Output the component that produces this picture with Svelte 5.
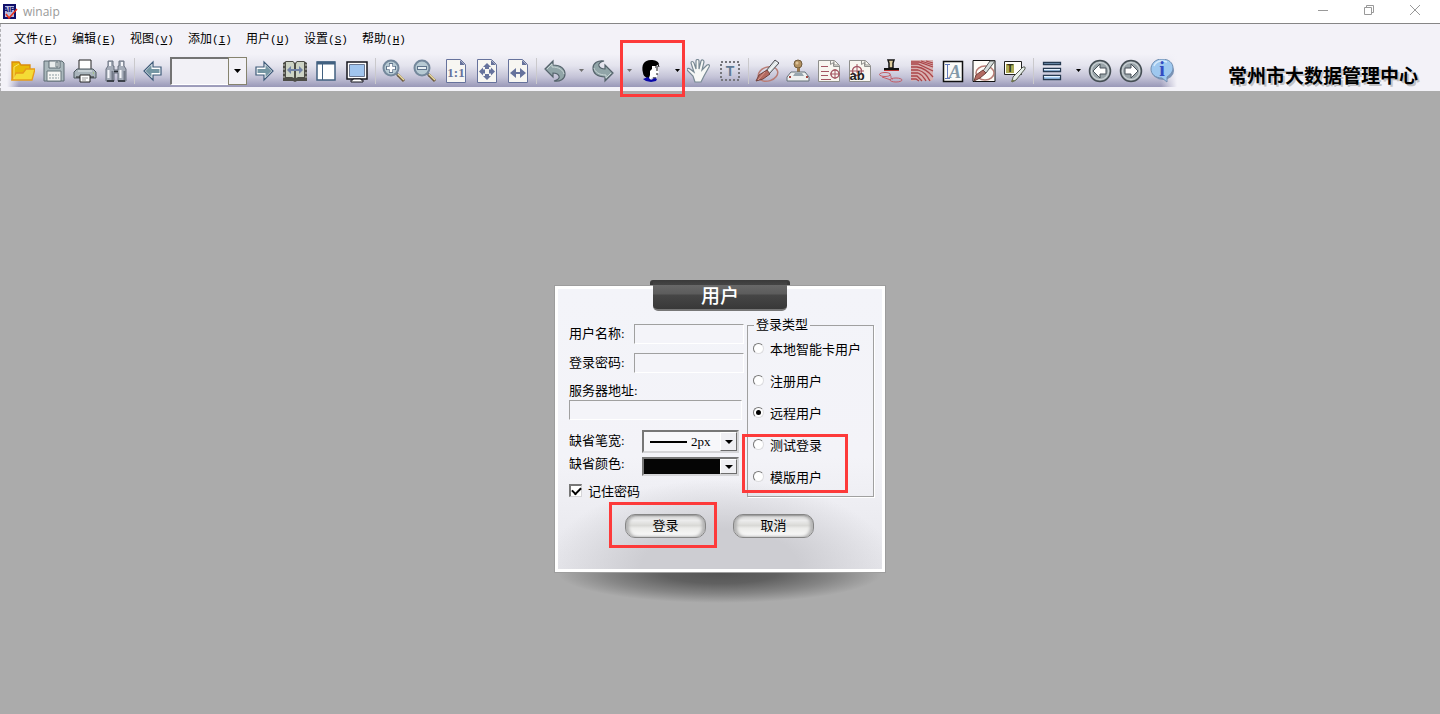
<script lang="ts">
  type Tool = { kind: 'button' | 'caret' | 'sep' | 'page'; icon?: string; label?: string; dim?: boolean; marked?: boolean };

  const menus = [
    { text: '文件', key: 'F' },
    { text: '编辑', key: 'E' },
    { text: '视图', key: 'V' },
    { text: '添加', key: 'I' },
    { text: '用户', key: 'U' },
    { text: '设置', key: 'S' },
    { text: '帮助', key: 'H' }
  ];

  const loginTypes = ['本地智能卡用户', '注册用户', '远程用户', '测试登录', '模版用户'];

  let userName = $state('');
  let password = $state('');
  let server = $state('');
  let page = $state('');
  let remember = $state(true);
  let loginType = $state('远程用户');

  const sheet = '<path d="M2.500 .500h14l5 5v18h-19z" fill="#f7f6f2" stroke="#66729c"/><path d="M16 1v5h5z" fill="#66729c"/>';
  const paper = '<path d="M1.500 1.500h16l5 5v16h-21z" fill="#f8f6f0" stroke="#8f8f8c"/><path d="M13.500 1.500v4l3-2v4h6M17 2v4h5" fill="none" stroke="#8f8f8c"/>';
  const arrowLeft = '<path d="M12 3v5h8v8h-8v5l-9-9z" fill="#fff" stroke="#3d5a78" stroke-width="1.200"/><path d="M10.500 6v4h8v4h-8v4l-6-6z" fill="#7596a3"/>';
  const lens = '<path d="M14 14l3 3" stroke="#777" stroke-width="3"/><path d="M16 16l6 6" stroke="#6c5a3e" stroke-width="3"/><path d="M16 15l6 6" stroke="#ecdca0" stroke-width="1.500"/><circle cx="9" cy="9" r="7.500" fill="#b7cad3" stroke="#74889c" stroke-width="2"/>';
  const round = '<circle cx="12" cy="12" r="10.500" fill="#aab4b8" stroke="#454e54" stroke-width="1.500"/><circle cx="12" cy="12" r="8.500" fill="#99a4a9" stroke="#d4dadd"/>';
  const turn = '<path d="M2 10L10 2v4c8 0 12 4 12 9s-5 8-11 7c4-1 6-3 5-5-1-2-3-3-6-3v4z" fill="#91a5a8" stroke="#55636c" stroke-width="1.200"/><path d="M4 10l5-5v3c7 0 11 3 12 7" fill="none" stroke="#c9d6d6"/>';
  const pen = '<path d="M11 12L20 1l4 3-10 11z" fill="#dbe2e4" stroke="#4b4a50"/><path d="M13 13l9-10" stroke="#fff"/><path d="M12 11l3 4-7 5-7 2 3-6z" fill="#b36a61" stroke="#71413c"/><path d="M10 13l-7 8" stroke="#d89b90"/>';

  const icons: Record<string, string> = {
    open: '<path d="M1 21V3h7l2 3h9v4" fill="#e8ba08" stroke="#da8c0c" stroke-width="1.300"/><path d="M1 21l4-7h7l3-4h9l-3 11z" fill="#f4dc35" stroke="#e69a19" stroke-width="1.300"/><path d="M3 20V8l5-3" fill="none" stroke="#f9e36a"/>',
    save: '<path d="M2 2h18l2 2v18H2z" fill="#aab8bc" stroke="#5c6b72"/><path d="M7 2h11v7H7z" fill="#e9eded" stroke="#5c6b72"/><path d="M14 3h2v5h-2zM5 12h14v10H5z" fill="#f6f6f4" stroke="#66767d"/><path d="M7 16h10M7 19h10" stroke="#8c9ba1" stroke-dasharray="2 1"/>',
    print: '<path d="M6 1h12v10H6z" fill="#fff" stroke="#222"/><path d="M4 10h16l3 3v6H1v-6z" fill="#a9b4bb" stroke="#4b565d"/><path d="M5 12h14" stroke="#e6ecef"/><path d="M3 18h18" stroke="#222"/><path d="M7 16h10v7H7z" fill="#fff" stroke="#222"/><path d="M9 19h6M9 21h4" stroke="#999"/><path d="M20 14h1" stroke="#9ccd52"/>',
    find: '<path d="M4 2h5v5h1v4h4V7h1V2h5v5l2 3v12h-8v-8h-4v8H2V10l2-3z" fill="#a5acb8" stroke="#68707f"/><path d="M6 3v4M18 3v4M4.500 11v8M16.500 11v8" stroke="#f5f6fa" stroke-width="2" fill="none"/><path d="M8.500 12v9M20.500 12v9" stroke="#727987" stroke-width="2"/><path d="M3 22h7M14 22h7M10 12.500h4" stroke="#252a31" stroke-width="1.500"/>',
    prev: arrowLeft,
    next: `<g transform="matrix(-1 0 0 1 24 0)">${arrowLeft}</g>`,
    book: '<path d="M0 4l3-2h7l2 2 2-2h7l3 2v18H14l-2 1-2-1H0z" fill="#4c4c46"/><path d="M3 3h7l1 2v14l-2-1H3zM21 3h-7l-1 2v14l2-1h6z" fill="#cdd3c5"/><path d="M0 6h2M0 10h2M0 14h2M0 18h2M22 6h2M22 10h2M22 14h2M22 18h2" stroke="#c8c8c0"/><path d="M4 11l4-4v3h8V7l4 4-4 4v-3H8v3z" fill="#7081a5"/>',
    panel: '<path d="M3 3h18v18H3z" fill="#fff" stroke="#416080" stroke-width="1.500"/><path d="M3 4h18" stroke="#416080" stroke-width="3"/><path d="M8.500 3v18" stroke="#416080"/>',
    screen: '<path d="M2 3h20v17H2z" fill="#fff" stroke="#15151c" stroke-width="1.500"/><path d="M4.500 5.500h15v12h-15z" fill="#a1c5ef" stroke="#6c7892"/><path d="M8 20h8v1h2v2H6v-2h2z" fill="#fff" stroke="#15151c"/>',
    zoomin: lens + '<path d="M9 4v10M4 9h10" stroke="#60758d" stroke-width="4"/><path d="M9 5v8M5 9h8" stroke="#fff" stroke-width="2.500"/>',
    zoomout: lens + '<path d="M4 9h10" stroke="#60758d" stroke-width="4"/><path d="M5 9h8" stroke="#e8f0f4" stroke-width="2"/>',
    actual: sheet + '<text x="12" y="18" class="i-ratio">1:1</text>',
    fit: sheet + '<path d="M12 4l4 4h-2v2h-4V8H8zM12 21l4-4h-2v-2h-4v2H8zM4 12.500l4-4v2h2v4H8v2zM20 12.500l-4-4v2h-2v4h2v2z" fill="#66729c"/>',
    width: sheet + '<path d="M4 14l6-5v4h4V9l6 5-6 5v-4h-4v4z" fill="#66729c"/>',
    undo: turn,
    redo: `<g transform="rotate(180 12 12)">${turn}</g>`,
    user: '<path d="M8 6l10-1 1 4 1 5-2 1v3h-4l-2 2H8z" fill="#fff"/><path d="M4 14C2 6 5 1 12 1c4 0 7 1 8 4l-3 2h-4v3l-2 2v4l-1 3H8c-2-1-4-3-4-5z" fill="#000"/><path d="M16 8h3M17 15h2M14 19h3M19 5l1 3M18 9v3" stroke="#111"/><path d="M4 20l5-2 3 3 4-2 2 1-1 2-5 1-5-1z" fill="#0808a8"/>',
    hand: '<path d="M8 23l-2-6-6-6c0-2 2-2 3-1l4 3L4 4c0-2 2-2 3 0l2 6V2c0-2 3-2 3 0v8l2-8c1-2 3-1 3 1l-2 8 5-5c2-1 3 0 2 2l-5 9-3 6z" fill="#f7f8f6" stroke="#788994" stroke-width="1.200"/>',
    text: '<path d="M3 3h18v18H3z" fill="none" stroke="#76767c" stroke-width="2" stroke-dasharray="2 2"/><text x="12" y="17" class="i-t">T</text>',
    pen: '<ellipse cx="13" cy="15" rx="10" ry="7" fill="none" stroke="#b97d76" stroke-width="1.500" transform="rotate(-18 13 15)"/>' + pen,
    stamp: '<circle cx="12" cy="5" r="4" fill="#b39161" stroke="#705b3c"/><circle cx="11" cy="4" r="1.500" fill="#ddc398"/><path d="M11 9h3v6h-3z" fill="#9a784b"/><path d="M5 13h14l4 5v4H1v-4z" fill="#eef0ef" stroke="#657078"/><path d="M9 14h7l2 3H7z" fill="#98a6ae"/><path d="M3 18h2M20 18h2" stroke="#a54742" stroke-width="2"/>',
    signlist: paper + '<path d="M4 7.500h7M4 12.500h8M4 16.500h7M4 20.500h10" stroke="#a45663"/><circle cx="18" cy="15" r="4" fill="none" stroke="#a45663" stroke-width="1.500"/><path d="M18 10v10M13 15h10" stroke="#a45663"/>',
    signtext: paper + '<circle cx="9" cy="12" r="4.500" fill="none" stroke="#a45663" stroke-width="1.500"/><path d="M9 5v9M2 12h14" stroke="#a45663"/><text x="9" y="21" class="i-ab">ab</text>',
    seal: '<path d="M9 1h6l-1 3v5h-4V4z" fill="#dccb9c" stroke="#151515" stroke-width="1.500"/><path d="M5 9h15v2H5z" fill="#111"/><path d="M5 11.500h15" stroke="#b33" /><ellipse cx="6" cy="15.500" rx="5.500" ry="2" fill="none" stroke="#c45c66"/><ellipse cx="17" cy="21" rx="6" ry="2" fill="none" stroke="#c45c66"/><path d="M10 16c4 0 0 4 4 4M3 18l9 3" stroke="#c45c66" fill="none"/>',
    finger: '<path d="M1 1h22v20l-3 1-4-1-4 1-5-1-6 1z" fill="#d8b0b0"/><path d="M1 3h8l14 5M1 5h7l15 7M1 8h6c8 1 12 5 16 10M1 11h7c7 2 9 6 12 11M1 14h7c5 2 6 5 8 8M1 17h6l5 5M1 20h5l3 2M11 2l12 4M16 2l7 2" fill="none" stroke="#ab4448" stroke-width="1.300"/>',
    font: '<path d="M2.500 2.500h19v20h-19z" fill="#fbfbf8" stroke="#111" stroke-width="1.500"/><path d="M4 5.500h5M4 19.500h5M6.500 5v14" stroke="#647abc"/><text x="14" y="19" class="i-a">A</text>',
    penbox: '<path d="M1 1.500h22v21H1z" fill="#fffdf8" stroke="#111"/><ellipse cx="13" cy="14" rx="9" ry="7" fill="none" stroke="#b97d76" stroke-width="1.500"/><path d="M11 12L18 2h5l-9 12z" fill="#d5dcda" stroke="#555"/><path d="M11 11l3 3-6 5-6 3 2-6z" fill="#b36a61" stroke="#71413c"/>',
    note: '<path d="M1.500 2.500h17v13h-17z" fill="#fffefa" stroke="#222"/><path d="M3 5h8v9H3z" fill="#adab54"/><text x="7" y="13" class="i-note">T</text><path d="M10 18l10-10h2v2L13 21l-4 2z" fill="#e6eeea" stroke="#555b50"/><path d="M9 20l3 2-4 1z" fill="#74794c"/>',
    lines: '<path d="M3.500 3.500h17v2h-17zM3.500 9.500h17v3h-17zM3.500 16.500h17v4h-17z" fill="#a7cef4" stroke="#263a50" stroke-width="1.300"/><path d="M4 10.500h16M4 17.500h16" stroke="#e3f0fc"/>',
    back: round + '<path d="M12 5v4h6v6h-6v4l-7-7z" fill="#fff" stroke="#485159"/>',
    forward: round + '<path d="M12 5v4H6v6h6v4l7-7z" fill="#fff" stroke="#485159"/>',
    info: '<ellipse cx="13" cy="12" rx="11" ry="9" fill="#7c94b6"/><path d="M12 0c7 0 11 4 11 9 0 4-3 7-6 9v5l-5-4C5 19 1 15 1 10S5 0 12 0z" fill="#9ec8ef" stroke="#718eb0"/><path d="M4 7c2-5 7-6 13-4" fill="none" stroke="#d6eafa" stroke-width="1.500"/><text x="12" y="17" class="i-info">i</text>'
  };

  const b = (icon: string, label: string): Tool => ({ kind: 'button', icon, label });
  const sep: Tool = { kind: 'sep' };

  const tools: Tool[] = [
    b('open', '打开'), b('save', '保存'), b('print', '打印'), b('find', '查找'), sep,
    b('prev', '上一页'), { kind: 'page' }, b('next', '下一页'),
    b('book', '双页'), b('panel', '侧栏'), b('screen', '全屏'), sep,
    b('zoomin', '放大'), b('zoomout', '缩小'), b('actual', '实际大小'), b('fit', '适合页面'), b('width', '适合宽度'), sep,
    b('undo', '撤销'), { kind: 'caret', dim: true, label: '撤销列表' },
    b('redo', '重做'), { kind: 'caret', dim: true, label: '重做列表' },
    { kind: 'button', icon: 'user', label: '用户', marked: true }, { kind: 'caret', label: '用户列表' },
    b('hand', '手形'), b('text', '选择文字'), sep,
    b('pen', '手写'), b('stamp', '盖章'), b('signlist', '批注'), b('signtext', '文字批注'), b('seal', '骑缝章'),
    b('finger', '指纹'), b('font', '字体'), b('penbox', '签名框'), b('note', '便签'), sep,
    b('lines', '线宽'), { kind: 'caret', label: '线宽列表' },
    b('back', '后退'), b('forward', '前进'), b('info', '关于')
  ];
</script>

<div class="window">
  <header class="titlebar">
    <svg class="app-icon" viewBox="0 0 16 16" width="16" height="16" aria-hidden="true">
      <path d="M2 1h11v13H2z" fill="#b9bce0" stroke="#10106a" stroke-width="2" />
      <text x="7" y="8" class="logo-text">AIP</text>
      <path d="M4 10l3 4 8-9" fill="none" stroke="#e8301c" stroke-width="1.500" />
    </svg>
    <span class="app-name">winaip</span>
    <div class="controls">
      <button aria-label="最小化"><svg width="12" height="12"><path d="M1 6.500h10" /></svg></button>
      <button aria-label="还原"><svg width="12" height="12"><path d="M1.500 3.500h7v7h-7zM3.500 3V1.500h7v7H9" /></svg></button>
      <button aria-label="关闭"><svg width="12" height="12"><path d="M1 1l10 10M11 1L1 11" /></svg></button>
    </div>
  </header>

  <div class="bars">
    <nav class="menubar">
      {#each menus as menu}
        <button class="menu">{menu.text}<span class="key">(<u>{menu.key}</u>)</span></button>
      {/each}
    </nav>

    <div class="toolbar">
      <div class="strip">
        {#each tools as tool}
          {#if tool.kind === 'sep'}
            <span class="sep"></span>
          {:else if tool.kind === 'page'}
            <div class="page">
              <input type="text" aria-label="页码" bind:value={page} />
              <button aria-label="选择页码"><svg width="7" height="4"><path d="M0 0h7L3.500 4z" /></svg></button>
            </div>
          {:else if tool.kind === 'caret'}
            <button class="caret" class:dim={tool.dim} aria-label={tool.label}>
              <svg width="5" height="3"><path d="M0 0h5L2.500 3z" /></svg>
            </button>
          {:else}
            <button class="tool" aria-label={tool.label}>
              <svg viewBox="0 0 24 24" width="24" height="24">{@html icons[tool.icon ?? '']}</svg>
              {#if tool.marked}<span class="mark mark-user"></span>{/if}
            </button>
          {/if}
        {/each}
      </div>
      <strong class="org">常州市大数据管理中心</strong>
    </div>
  </div>

  <main class="workspace">
    <form class="dialog" onsubmit={(e) => e.preventDefault()}>
      <h1 class="tab">用户</h1>

      <div class="columns">
        <div class="fields">
          <div class="row">
            <label for="user-name">用户名称:</label>
            <input id="user-name" class="field" type="text" bind:value={userName} />
          </div>
          <div class="row">
            <label for="password">登录密码:</label>
            <input id="password" class="field" type="password" bind:value={password} />
          </div>
          <div class="server">
            <label for="server">服务器地址:</label>
            <input id="server" class="field" type="text" bind:value={server} />
          </div>
          <div class="row pick">
            <label for="pen-width">缺省笔宽:</label>
            <div class="combo">
              <select id="pen-width"><option>2px</option></select>
              <span class="stroke"></span>
              <span class="drop"><svg width="8" height="4"><path d="M0 0h8L4 4z" /></svg></span>
            </div>
          </div>
          <div class="row pick low">
            <label for="pen-color">缺省颜色:</label>
            <div class="combo black">
              <select id="pen-color"><option aria-label="黑色" value="#000000"></option></select>
              <span class="drop"><svg width="8" height="4"><path d="M0 0h8L4 4z" /></svg></span>
            </div>
          </div>
          <label class="remember">
            <input type="checkbox" bind:checked={remember} />
            记住密码
          </label>
        </div>

        <fieldset class="types">
          <legend>登录类型</legend>
          {#each loginTypes as type}
            <label>
              <input type="radio" name="login-type" value={type} bind:group={loginType} />
              {type}
            </label>
          {/each}
          <span class="mark mark-types"></span>
        </fieldset>
      </div>

      <div class="actions">
        <button class="pill" type="submit">登录<span class="mark mark-login"></span></button>
        <button class="pill" type="button">取消</button>
      </div>
      <span class="shadow"></span>
    </form>
  </main>
</div>

<style>
  :global(body) {
    background: #ababab;
  }

  .window {
    display: flex;
    flex-direction: column;
    min-height: 100vh;
    font-family: "Liberation Serif", "Noto Sans CJK SC", sans-serif;
    font-size: 13px;
    color: #000;
  }

  .window * {
    box-sizing: border-box;
  }

  button, input, select {
    font: inherit;
    color: inherit;
    margin: 0;
    padding: 0;
  }

  button {
    border: 0;
    background: none;
  }

  /* title bar */
  .titlebar {
    display: flex;
    align-items: center;
    height: 24px;
    padding: 0 2px;
    background: #fff;
    border-bottom: 1px solid #868686;
  }

  .logo-text {
    font: bold 7px "Liberation Sans", sans-serif;
    text-anchor: middle;
    fill: #10106a;
  }

  .app-name {
    margin-left: 5px;
    font-family: "Open Sans", sans-serif;
    font-size: 12px;
    color: #999;
  }

  .controls {
    display: flex;
    align-self: flex-start;
    margin-left: auto;
  }

  .controls button {
    display: grid;
    place-items: center;
    width: 46px;
    height: 20px;
  }

  .controls svg {
    fill: none;
    stroke: #999;
  }

  /* menu and tool bars */
  .bars {
    background: #f3f2f8;
    border-left: 1px dashed #b0b0b4;
  }

  .menubar {
    display: flex;
    height: 28px;
    padding-left: 13px;
  }

  .menu {
    width: 58px;
    font-size: 12px;
    text-align: left;
    white-space: nowrap;
  }

  .key {
    font-family: "Liberation Mono", monospace;
    font-size: 11px;
  }

  .toolbar {
    display: flex;
    align-items: flex-start;
    height: 39px;
    padding: 2px 22px 0 6px;
  }

  .strip {
    display: flex;
    align-items: center;
    height: 33px;
    background:
      linear-gradient(to right, #f3f2f8, #f3f2f800 12px, #f3f2f800 calc(100% - 16px), #f3f2f8),
      linear-gradient(#f3f2f8, #e4e4ee 35%, #c4c3d7 70%, #9998b8);
  }

  .tool {
    position: relative;
    display: grid;
    place-items: center;
    width: 31px;
    height: 32px;
  }

  .tool :global(text) {
    text-anchor: middle;
    font-family: "Liberation Sans", sans-serif;
    font-weight: bold;
  }

  .tool :global(.i-ratio) {
    font-family: "Liberation Serif", serif;
    font-size: 13px;
    fill: #66729c;
  }

  .tool :global(.i-t) {
    font-size: 14px;
    fill: #607a94;
  }

  .tool :global(.i-ab) {
    font-size: 13px;
    fill: #222;
  }

  .tool :global(.i-a) {
    font-family: "Liberation Serif", serif;
    font-style: italic;
    font-size: 18px;
    fill: #8399a8;
  }

  .tool :global(.i-note) {
    font-size: 10px;
    fill: #343418;
  }

  .tool :global(.i-info) {
    font-family: "Liberation Serif", serif;
    font-size: 20px;
    fill: #334cc1;
  }

  .sep {
    width: 1px;
    height: 26px;
    margin: 0 2px 0 3px;
    background: #cac9cc;
  }

  .caret {
    display: grid;
    place-items: center;
    width: 17px;
    height: 32px;
    padding-left: 5px;
  }

  .caret.dim {
    fill: #707070;
  }

  .page {
    display: flex;
    width: 80px;
    height: 28px;
    padding: 0 1px 0 2px;
  }

  .page input {
    flex: 1;
    min-width: 0;
    padding: 0 4px;
    background: #f2f1f6;
    border: 2px solid #737373;
    border-right: 0;
    border-bottom: 1px solid #fff;
    border-radius: 0;
  }

  .page button {
    display: grid;
    place-items: center;
    width: 19px;
    background: #f2f1f6;
    border: 1px solid #86836e;
  }

  .org {
    margin: 11px 0 0 auto;
    font-size: 19px;
    line-height: 24px;
    text-shadow: 2px 2px 0 #c2c2c6;
    white-space: nowrap;
  }

  /* red callouts */
  .mark {
    position: absolute;
    z-index: 2;
    border: 3px solid #fd3a3a;
    pointer-events: none;
  }

  .mark-user {
    left: -15px;
    top: -15px;
    width: 65px;
    height: 57px;
  }

  .mark-types {
    right: 25px;
    bottom: 3px;
    width: 106px;
    height: 59px;
  }

  .mark-login {
    inset: -13px -12px -11px -17px;
  }

  /* login dialog */
  .workspace {
    flex: 1;
    display: flex;
    justify-content: center;
    align-items: flex-start;
    padding: 195px 0 40px;
    background: #ababab;
  }

  .dialog {
    position: relative;
    z-index: 0;
    width: 330px;
    padding: 28px 8px 31px 11px;
    background:
      radial-gradient(54% 32% at 50% 100%, #cdcdd2 45%, #cdcdd200 100%),
      linear-gradient(#f3f4f9, #f3f3f8 60%, #e6e6eb 100%);
    border: 3px solid #fff;
    outline: 1px solid #9d9d9d;
  }

  .tab {
    position: absolute;
    left: 50%;
    top: -9px;
    width: 134px;
    height: 31px;
    margin: 0 0 0 -67px;
    font-size: 19px;
    font-weight: 500;
    line-height: 34px;
    text-align: center;
    color: #fff;
    background: linear-gradient(#3a3a3a 0, #444 16%, #686868 18%, #5c5c5c 48%, #464646 52%, #383838 100%);
    border-bottom: 2px solid #777;
    border-radius: 0 0 5px 5px;
  }

  .tab::before {
    content: '';
    position: absolute;
    inset: 0 -3px auto;
    height: 6px;
    z-index: -1;
    background: #3a3a3a;
    border-radius: 3px 3px 0 0;
  }

  .columns {
    display: flex;
    align-items: flex-start;
    gap: 3px;
  }

  .fields {
    flex: 1;
    min-width: 0;
    display: flex;
    flex-direction: column;
    padding-top: 7px;
  }

  .row {
    display: flex;
    align-items: center;
    height: 20px;
    margin-bottom: 9px;
  }

  .row label {
    flex: 0 0 65px;
    padding-bottom: 4px;
  }

  .field {
    flex: 1;
    min-width: 0;
    height: 20px;
    padding: 0 3px;
    background: #f4f4f9;
    border: 1px solid #a0a0a0;
    border-right-color: #fff;
    border-bottom-color: #fff;
    border-radius: 0;
  }

  .server {
    display: flex;
    flex-direction: column;
    padding-right: 2px;
    margin-bottom: 10px;
    line-height: 18px;
  }

  .server .field {
    flex: none;
  }

  .pick {
    height: 23px;
    margin-bottom: 4px;
    padding-right: 5px;
  }

  .pick label {
    flex-basis: 73px;
  }

  .pick.low {
    height: 19px;
    margin-bottom: 7px;
  }

  .pick.low label {
    padding-bottom: 8px;
  }

  .combo {
    flex: 1;
    display: grid;
    grid-template-columns: 1fr 17px;
    align-self: stretch;
    min-width: 0;
    background: #f7f7fa;
    border: 2px solid #777;
    border-right-color: #d5d5d8;
    border-bottom-color: #d5d5d8;
  }

  .combo select {
    grid-area: 1 / 1 / 2 / 3;
    min-width: 0;
    min-height: 0;
    padding-left: 47px;
    background: none;
    border: 0;
    appearance: none;
  }

  .combo.black {
    background: #050505;
  }

  .stroke {
    grid-area: 1 / 1;
    align-self: center;
    width: 37px;
    height: 2px;
    margin-left: 6px;
    background: #000;
    pointer-events: none;
  }

  .drop {
    grid-area: 1 / 2;
    display: grid;
    place-items: center;
    background: #efeff3;
    border: 1px solid #fff;
    border-right-color: #6c6c6c;
    border-bottom-color: #6c6c6c;
    pointer-events: none;
  }

  .remember {
    display: flex;
    align-items: center;
    gap: 6px;
    height: 14px;
  }

  .remember input {
    appearance: none;
    display: grid;
    place-items: center;
    width: 13px;
    height: 13px;
    background: #fff;
    border: 1px solid #777;
    border-width: 2px 1px 1px 2px;
    border-right-color: #d5d5d8;
    border-bottom-color: #d5d5d8;
  }

  .remember input:checked::before {
    content: '';
    width: 7px;
    height: 4px;
    margin-top: -2px;
    border: solid #000;
    border-width: 0 0 2px 2px;
    transform: rotate(-45deg);
  }

  .types {
    position: relative;
    flex: 0 0 127px;
    height: 180px;
    margin: 0;
    padding: 7px 0 0 5px;
    border: 1px solid #a0a0a0;
    box-shadow: 1px 1px 0 #fff;
  }

  .types legend {
    margin-left: 1px;
    padding: 0 2px;
    line-height: 16px;
  }

  .types label {
    display: flex;
    align-items: center;
    gap: 6px;
    height: 16px;
    margin-bottom: 16px;
    white-space: nowrap;
  }

  .types input {
    appearance: none;
    display: grid;
    place-items: center;
    width: 11px;
    height: 11px;
    background: #fff;
    border: 1px solid #777;
    border-right-color: #dcdcdf;
    border-bottom-color: #dcdcdf;
    border-radius: 50%;
  }

  .types input:checked::before {
    content: '';
    width: 5px;
    height: 5px;
    background: #000;
    border-radius: 50%;
  }

  .actions {
    display: flex;
    gap: 27px;
    margin: 17px 0 0 56px;
  }

  .pill {
    position: relative;
    width: 81px;
    height: 24px;
    padding-bottom: 3px;
    background: linear-gradient(#cfcfcf, #ececec 25%, #d9d9d6 48%, #ececea 60%, #fbfbfb);
    border: 1px solid #858585;
    border-radius: 10px;
    box-shadow: inset 3px 0 3px #b5b5b5, inset -3px 0 3px #b5b5b5, inset 0 1px 1px #777;
  }

  .shadow {
    position: absolute;
    left: 0;
    right: 0;
    top: calc(100% + 4px);
    height: 30px;
    background: radial-gradient(50% 100% at 50% 0, #555 0, #606060 35%, #858585 70%, #ababab 100%);
    pointer-events: none;
  }
</style>
